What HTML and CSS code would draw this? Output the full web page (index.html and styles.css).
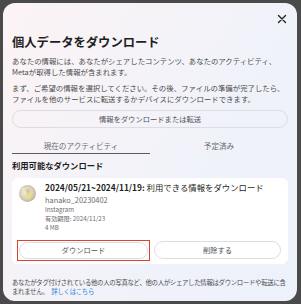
FILE: index.html
```html
<!DOCTYPE html>
<html lang="ja">
<head>
<meta charset="utf-8">
<title>個人データをダウンロード</title>
<link rel="stylesheet" href="styles.css">
</head>
<body>
<div class="modal">
  <div class="header">
    <svg class="close" width="10" height="10" viewBox="0 0 10 10"><path d="M1.5 1.5 L8.5 8.5 M8.5 1.5 L1.5 8.5" stroke="#1c1e21" stroke-width="1.3" stroke-linecap="round"/></svg>
  </div>
  <h1 class="title">個人データをダウンロード</h1>
  <p class="desc">あなたの情報には、あなたがシェアしたコンテンツ、あなたのアクティビティ、Metaが取得した情報が含まれます。</p>
  <p class="desc second">まず、ご希望の情報を選択してください。その後、ファイルの準備が完了したら、ファイルを他のサービスに転送するかデバイスにダウンロードできます。</p>
  <div class="wide-btn">情報をダウンロードまたは転送</div>
  <div class="tabs">
    <div class="tab active">現在のアクティビティ</div>
    <div class="tab">予定済み</div>
  </div>
  <h2 class="section">利用可能なダウンロード</h2>
  <div class="card">
    <div class="card-top">
      <svg class="avatar" width="17" height="17" viewBox="0 0 17 17">
        <defs>
          <radialGradient id="g" cx="45%" cy="45%" r="60%">
            <stop offset="0" stop-color="#f3efe0"/>
            <stop offset="0.6" stop-color="#d9d2b8"/>
            <stop offset="1" stop-color="#b9ae90"/>
          </radialGradient>
          <clipPath id="c"><circle cx="8.5" cy="8.5" r="8.5"/></clipPath>
        </defs>
        <g clip-path="url(#c)">
          <rect width="17" height="17" fill="url(#g)"/>
          <ellipse cx="9.5" cy="10" rx="2.5" ry="4" fill="#e6dd8c"/>
          <ellipse cx="9" cy="6" rx="2" ry="2" fill="#cfc6a4"/>
          <rect x="3" y="3" width="3" height="7" fill="#e9e4d0"/>
        </g>
      </svg>
      <div class="info">
        <div class="info-title"><b>2024/05/21~2024/11/19:</b> 利用できる情報をダウンロード</div>
        <div class="info-user">hanako_20230402</div>
        <div class="info-meta">Instagram</div>
        <div class="info-meta">有効期限: 2024/11/23</div>
        <div class="info-meta">4 MB</div>
      </div>
    </div>
    <div class="actions">
      <div class="highlight"><div class="pill">ダウンロード</div></div>
      <div class="pill delete">削除する</div>
    </div>
  </div>
  <p class="foot">あなたがタグ付けされている他の人の写真など、他の人がシェアした情報はダウンロードや転送に含まれません。<span class="link">詳しくはこちら</span></p>
</div>
</body>
</html>
```

FILE: styles.css
```css
html, body {
  margin: 0;
  padding: 0;
}
body {
  background: #4a4a4b;
  width: 301px;
  height: 304px;
  overflow: hidden;
  font-family: "Noto Sans CJK JP", "Noto Sans", sans-serif;
  color: #3a3b3d;
}
.modal {
  box-sizing: border-box;
  margin: 3px 0 0 3px;
  width: 294px;
  height: 298px;
  border-radius: 12px;
  padding: 0 9px;
  background: linear-gradient(120deg, #fcf3f5 0%, #f5f3f8 35%, #eff2fa 70%, #edf1fa 100%);
  overflow: hidden;
}
.header {
  height: 31px;
  display: flex;
  justify-content: flex-end;
  align-items: center;
}
.close {
  margin-right: 1px;
}
.title {
  margin: 0;
  font-size: 12.3px;
  line-height: 16px;
  font-weight: 700;
  color: #1c1e21;
}
.desc {
  margin: 4.5px 0 0;
  font-size: 7.4px;
  line-height: 11px;
  color: #4a4b4d;
}
.desc.second {
  margin-top: 5px;
}
.wide-btn {
  margin-top: 6.5px;
  height: 18px;
  box-sizing: border-box;
  border: 1px solid #dcdde3;
  border-radius: 9px;
  display: flex;
  align-items: center;
  justify-content: center;
  font-size: 7.3px;
  color: #505155;
}
.tabs {
  margin-top: 6px;
  display: flex;
}
.tab {
  flex: 1;
  text-align: center;
  font-size: 7.6px;
  line-height: 12px;
  padding: 6px 0 1px;
  color: #6b6c70;
  border-bottom: 1.5px solid transparent;
}
.tab.active {
  border-bottom-color: #5c5d61;
}
.section {
  margin: 4.5px 0 0;
  font-size: 8.3px;
  line-height: 12px;
  font-weight: 700;
  color: #1c1e21;
}
.card {
  margin-top: 7px;
  background: #ffffff;
  border-radius: 6px;
  padding: 3px 5px 3px 5px;
  box-sizing: border-box;
}
.card-top {
  display: flex;
  align-items: flex-start;
}
.avatar {
  margin: 4px 0 0 2px;
  flex-shrink: 0;
}
.info {
  margin-left: 9px;
}
.info-title {
  font-size: 8.4px;
  line-height: 12px;
  color: #1c1e21;
}
.info-title b {
  font-weight: 700;
}
.info-user {
  margin-top: 1px;
  font-size: 7.4px;
  line-height: 11px;
  color: #6b6c70;
}
.info-meta {
  font-size: 6.2px;
  line-height: 9px;
  color: #6b6c70;
}
.actions {
  margin-top: 8px;
  display: flex;
  gap: 4px;
  align-items: center;
}
.highlight {
  flex: 0 0 133px;
  box-sizing: border-box;
  height: 21px;
  border: 1.5px solid #d9432f;
  padding: 1px;
  display: flex;
}
.pill {
  flex: 1;
  box-sizing: border-box;
  height: 17px;
  border: 1px solid #dcdde3;
  border-radius: 9px;
  display: flex;
  align-items: center;
  justify-content: center;
  font-size: 7.3px;
  color: #505155;
  background: #fff;
}
.pill.delete {
  flex: 0 0 127px;
  height: 18.5px;
  border-radius: 9.5px;
}
.foot {
  margin: 14px 0 0;
  font-size: 6.4px;
  line-height: 9.5px;
  letter-spacing: -0.3px;
  color: #4a4b4d;
}
.link {
  margin-left: 3px;
  color: #2e7fd9;
}
```
